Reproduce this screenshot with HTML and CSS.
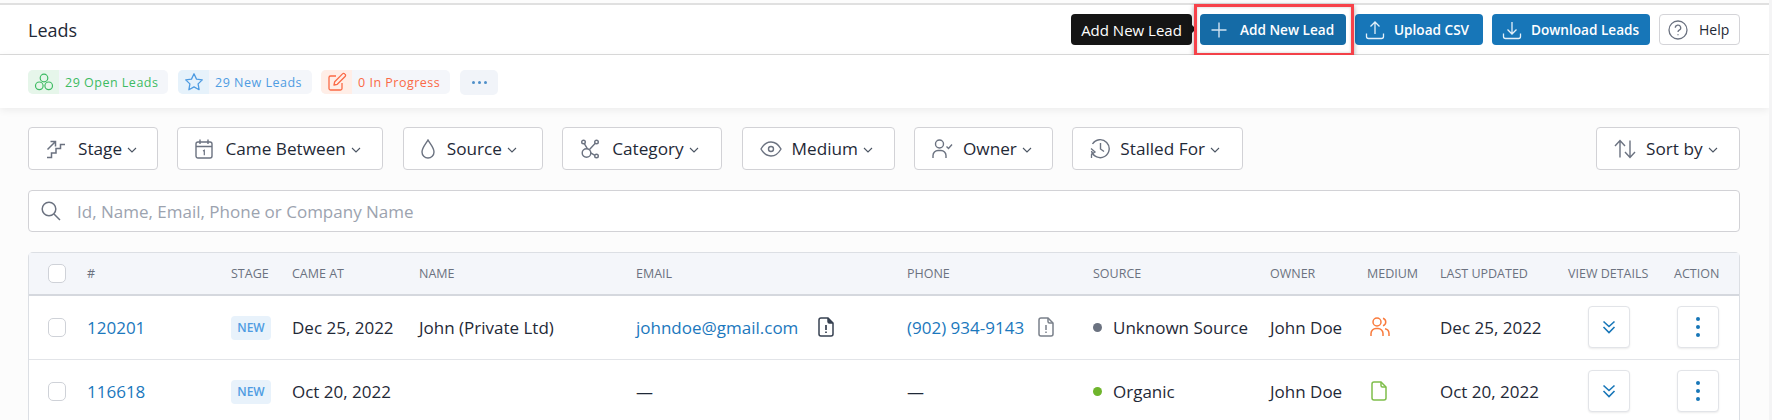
FILE: index.html
```html
<!DOCTYPE html>
<html lang="en">
<head>
    <meta charset="UTF-8">
    <meta name="viewport" content="width=device-width, initial-scale=1.0">
    <title>Leads</title>
    <link rel="stylesheet" href="styles.css">
</head>
<body>
<div class="page">
    <header class="topbar">
        <h1>Leads</h1>
        <div class="actions">
            <div class="add-wrap">
                <div class="tooltip">Add New Lead<span class="tooltip-ghost"><svg width="24" height="24" viewBox="0 0 24 24" fill="none" stroke="#2a2d30" stroke-width="1.5"><path d="M3 12l9-8 9 8v8H3z"/></svg></span></div>
                <button class="btn btn-primary btn-hover btn-add">
                    <svg width="18" height="18" viewBox="0 0 18 18" fill="none" stroke="#cfe3f2" stroke-width="1.4"><path d="M9 1.500v15M1.500 9h15"/></svg>
                    <span>Add New Lead</span>
                </button>
                <div class="red-box"></div>
            </div>
            <button class="btn btn-primary btn-upload">
                <svg width="20" height="20" viewBox="0 0 20 20" fill="none" stroke="#e4f0f9" stroke-width="1.3"><path d="M10 14V2M5.500 6.500L10 2l4.500 4.500M1.500 13.500v3a2 2 0 0 0 2 2h13a2 2 0 0 0 2-2v-3"/></svg>
                <span>Upload CSV</span>
            </button>
            <button class="btn btn-primary btn-download">
                <svg width="20" height="20" viewBox="0 0 20 20" fill="none" stroke="#e4f0f9" stroke-width="1.3"><path d="M10 2v12M5.500 9.500L10 14l4.500-4.500M1.500 13.500v3a2 2 0 0 0 2 2h13a2 2 0 0 0 2-2v-3"/></svg>
                <span>Download Leads</span>
            </button>
            <button class="btn btn-help">
                <svg width="20" height="20" viewBox="0 0 20 20" fill="none" stroke="#6b7280" stroke-width="1.3"><circle cx="10" cy="10" r="9"/><path d="M7.300 7.800a2.700 2.700 0 1 1 3.900 2.400c-.8.400-1.200 1-1.200 1.900"/><path d="M10 14.200v1.100"/></svg>
                <span>Help</span>
            </button>
        </div>
    </header>

    <div class="stats">
        <div class="chip chip-green">
            <span class="chip-icon"><svg width="20" height="20" viewBox="0 0 20 20" fill="none" stroke="currentColor" stroke-width="1.2"><circle cx="10" cy="6" r="3.800"/><circle cx="5.300" cy="13.800" r="3.800"/><circle cx="14.700" cy="13.800" r="3.800"/></svg></span>
            <span class="chip-text">29 Open Leads</span>
        </div>
        <div class="chip chip-blue">
            <span class="chip-icon"><svg width="20" height="20" viewBox="0 0 20 20" fill="none" stroke="currentColor" stroke-width="1.3" stroke-linejoin="round"><path d="M10 1.800l2.500 5.300 5.800.8-4.200 4 1 5.800-5.100-2.800-5.100 2.800 1-5.800-4.200-4 5.800-.8z"/></svg></span>
            <span class="chip-text">29 New Leads</span>
        </div>
        <div class="chip chip-orange">
            <span class="chip-icon"><svg width="20" height="20" viewBox="0 0 20 20" fill="none" stroke="currentColor" stroke-width="1.3" stroke-linejoin="round"><path d="M9 4H3.500A1.500 1.500 0 0 0 2 5.500v11A1.500 1.500 0 0 0 3.500 18h10a1.500 1.500 0 0 0 1.500-1.500V11"/><path d="M7 13l.7-3.300 7.800-7.800a1.500 1.500 0 0 1 2.200 0l.4.400a1.500 1.500 0 0 1 0 2.200l-7.800 7.800z"/></svg></span>
            <span class="chip-text">0 In Progress</span>
        </div>
        <button class="chip-more"><i></i><i></i><i></i></button>
    </div>

    <main class="content">
        <div class="filters">
            <button class="filter f-stage">
                <svg width="20" height="20" viewBox="0 0 20 20" fill="none" stroke="#6b7280" stroke-width="1.500"><path d="M1 18.500h4.500v-4.500h4.500v-4.500h4.500V5.500H19"/><path d="M1.500 10.500L9 3M4.500 2.500H9.500V7.500"/></svg>
                <span class="filter-label">Stage</span>
                <svg class="chev" width="10" height="6" viewBox="0 0 10 6" fill="none" stroke="#4b5563" stroke-width="1.100"><path d="M1 1l4 4 4-4"/></svg>
            </button>
            <button class="filter f-came">
                <svg width="18" height="20" viewBox="0 0 18 20" fill="none" stroke="#6b7280" stroke-width="1.400"><rect x="1" y="3" width="16" height="16" rx="2"/><path d="M1 7.500h16M5 .5v4.500M13 .5v4.500"/><path d="M8 12l1.300-.8v5" stroke-width="1.200"/></svg>
                <span class="filter-label">Came Between</span>
                <svg class="chev" width="10" height="6" viewBox="0 0 10 6" fill="none" stroke="#4b5563" stroke-width="1.100"><path d="M1 1l4 4 4-4"/></svg>
            </button>
            <button class="filter f-source">
                <svg width="14" height="20" viewBox="0 0 14 20" fill="none" stroke="#6b7280" stroke-width="1.400"><path d="M7 1c1.800 3.500 6 7.500 6 12a6 6 0 0 1-12 0C1 8.500 5.200 4.500 7 1z"/></svg>
                <span class="filter-label">Source</span>
                <svg class="chev" width="10" height="6" viewBox="0 0 10 6" fill="none" stroke="#4b5563" stroke-width="1.100"><path d="M1 1l4 4 4-4"/></svg>
            </button>
            <button class="filter f-category">
                <svg width="20" height="20" viewBox="0 0 20 20" fill="none" stroke="#6b7280" stroke-width="1.400"><circle cx="3.500" cy="3" r="1.800"/><circle cx="16.500" cy="3" r="1.800"/><circle cx="16.500" cy="17" r="1.800"/><circle cx="6.500" cy="14" r="4.300"/><path d="M4.300 4.600l3.200 5.200M15.300 4.300L9.500 10.500M10.700 13.800l4.200 2.500"/></svg>
                <span class="filter-label">Category</span>
                <svg class="chev" width="10" height="6" viewBox="0 0 10 6" fill="none" stroke="#4b5563" stroke-width="1.100"><path d="M1 1l4 4 4-4"/></svg>
            </button>
            <button class="filter filter-tight f-medium">
                <svg width="22" height="16" viewBox="0 0 22 16" fill="none" stroke="#6b7280" stroke-width="1.400"><path d="M1 8c2.500-4.500 6-7 10-7s7.500 2.500 10 7c-2.500 4.500-6 7-10 7S3.500 12.500 1 8z"/><circle cx="11" cy="8" r="2.500"/></svg>
                <span class="filter-label">Medium</span>
                <svg class="chev" width="10" height="6" viewBox="0 0 10 6" fill="none" stroke="#4b5563" stroke-width="1.100"><path d="M1 1l4 4 4-4"/></svg>
            </button>
            <button class="filter filter-tight f-owner">
                <svg width="21" height="20" viewBox="0 0 21 20" fill="none" stroke="#6b7280" stroke-width="1.400"><circle cx="7.500" cy="5" r="4"/><path d="M1 19v-2.500a5 5 0 0 1 5-5h3a5 5 0 0 1 5 5V19"/><path d="M14.500 7.500l2 2 3.500-4"/></svg>
                <span class="filter-label">Owner</span>
                <svg class="chev" width="10" height="6" viewBox="0 0 10 6" fill="none" stroke="#4b5563" stroke-width="1.100"><path d="M1 1l4 4 4-4"/></svg>
            </button>
            <button class="filter filter-tight f-stalled">
                <svg width="20" height="21" viewBox="0 0 20 21" fill="none" stroke="#6b7280" stroke-width="1.400"><path d="M2.500 6A9 9 0 1 1 1.500 13"/><path d="M10.500 5v6l3.500 2.500"/><path d="M1 10.500l4 3.500-3.500 2.500v3.500M1.500 15.500l4-1.500" stroke-width="1.300"/></svg>
                <span class="filter-label">Stalled For</span>
                <svg class="chev" width="10" height="6" viewBox="0 0 10 6" fill="none" stroke="#4b5563" stroke-width="1.100"><path d="M1 1l4 4 4-4"/></svg>
            </button>
            <button class="filter filter-tight filter-sort">
                <svg width="22" height="20" viewBox="0 0 22 20" fill="none" stroke="#6b7280" stroke-width="1.400"><path d="M6 18.500V2M1 7l5-5.500L11 7M16 1.500V18M11 13l5 5.500 5-5.500"/></svg>
                <span class="filter-label">Sort by</span>
                <svg class="chev" width="10" height="6" viewBox="0 0 10 6" fill="none" stroke="#4b5563" stroke-width="1.100"><path d="M1 1l4 4 4-4"/></svg>
            </button>
        </div>

        <div class="search">
            <svg width="20" height="20" viewBox="0 0 20 20" fill="none" stroke="#6b7280" stroke-width="1.500"><circle cx="8" cy="8" r="6.800"/><path d="M13 13l6 6"/></svg>
            <input type="text" placeholder="Id, Name, Email, Phone or Company Name">
        </div>

        <div class="table-wrap">
            <table class="leads">
                <colgroup>
                    <col class="c-check"><col class="c-id"><col class="c-stage"><col class="c-came"><col class="c-name"><col class="c-email"><col class="c-phone"><col class="c-source"><col class="c-owner"><col class="c-medium"><col class="c-updated"><col class="c-view"><col class="c-action">
                </colgroup>
                <thead>
                    <tr>
                        <th><span class="check"></span></th>
                        <th>#</th>
                        <th>Stage</th>
                        <th>Came At</th>
                        <th>Name</th>
                        <th>Email</th>
                        <th>Phone</th>
                        <th>Source</th>
                        <th>Owner</th>
                        <th>Medium</th>
                        <th>Last Updated</th>
                        <th>View Details</th>
                        <th>Action</th>
                    </tr>
                </thead>
                <tbody>
                    <tr>
                        <td><span class="check"></span></td>
                        <td><a class="link">120201</a></td>
                        <td><span class="badge">NEW</span></td>
                        <td>Dec 25, 2022</td>
                        <td>John (Private Ltd)</td>
                        <td><span class="with-icon with-icon-email"><a class="link">johndoe@gmail.com</a>
                            <svg width="16" height="20" viewBox="0 0 16 20" fill="none" stroke="#374151" stroke-width="1.500"><path d="M10 1H3a2 2 0 0 0-2 2v14a2 2 0 0 0 2 2h10a2 2 0 0 0 2-2V6z"/><path d="M10 1v3.500a1.500 1.500 0 0 0 1.500 1.500H15" fill="#374151"/><path d="M8 8v5M8 14.500v1.500" stroke-width="1.700"/></svg></span></td>
                        <td><span class="with-icon with-icon-phone"><a class="link">(902) 934-9143</a>
                            <svg width="16" height="20" viewBox="0 0 16 20" fill="none" stroke="#7a808a" stroke-width="1.500"><path d="M10 1H3a2 2 0 0 0-2 2v14a2 2 0 0 0 2 2h10a2 2 0 0 0 2-2V6z"/><path d="M10 1v3.500a1.500 1.500 0 0 0 1.500 1.500H15"/><path d="M8 8v5M8 14.500v1.500" stroke-width="1.500"/></svg></span></td>
                        <td><span class="source"><i class="dot dot-gray"></i>Unknown Source</span></td>
                        <td>John Doe</td>
                        <td><svg class="medium-icon" width="20" height="20" viewBox="0 0 20 20" fill="none" stroke="#f97b3d" stroke-width="1.500"><circle cx="7" cy="5" r="4"/><path d="M1 19v-2.500a5 5 0 0 1 5-5h2a5 5 0 0 1 5 5V19"/><path d="M13 1.200a4 4 0 0 1 0 7.600M15 11.700a5 5 0 0 1 4 4.800V19"/></svg></td>
                        <td>Dec 25, 2022</td>
                        <td><button class="row-btn row-btn-view"><svg width="14" height="14" viewBox="0 0 14 14" fill="none" stroke="#1776b8" stroke-width="1.600"><path d="M1.500 1.500L7 6.500l5.500-5M1.500 7L7 12.500 12.500 7"/></svg></button></td>
                        <td><button class="row-btn row-btn-action"><i></i><i></i><i></i></button></td>
                    </tr>
                    <tr>
                        <td><span class="check"></span></td>
                        <td><a class="link">116618</a></td>
                        <td><span class="badge">NEW</span></td>
                        <td>Oct 20, 2022</td>
                        <td></td>
                        <td>—</td>
                        <td>—</td>
                        <td><span class="source"><i class="dot dot-green"></i>Organic</span></td>
                        <td>John Doe</td>
                        <td><svg class="medium-icon medium-doc" width="16" height="20" viewBox="0 0 16 20" fill="none" stroke="#7fbe4b" stroke-width="1.500"><path d="M10 1H3a2 2 0 0 0-2 2v14a2 2 0 0 0 2 2h10a2 2 0 0 0 2-2V6z"/><path d="M10 1v3.500a1.500 1.500 0 0 0 1.500 1.500H15"/></svg></td>
                        <td>Oct 20, 2022</td>
                        <td><button class="row-btn row-btn-view"><svg width="14" height="14" viewBox="0 0 14 14" fill="none" stroke="#1776b8" stroke-width="1.600"><path d="M1.500 1.500L7 6.500l5.500-5M1.500 7L7 12.500 12.500 7"/></svg></button></td>
                        <td><button class="row-btn row-btn-action"><i></i><i></i><i></i></button></td>
                    </tr>
                </tbody>
            </table>
        </div>
    </main>
</div>
</body>
</html>
```

FILE: styles.css
```css
* {
    box-sizing: border-box;
}
html, body {
    height: 100%;
}
body {
    margin: 0;
    overflow: hidden;
    background-color: #f4f4f5;
    font-family: 'Open Sans', 'Noto Sans', sans-serif;
    color: #1f2937;
}
button {
    font-family: inherit;
    cursor: pointer;
}
.page {
    width: 1769px;
    height: 420px;
    padding-top: 3px;
    overflow: hidden;
    background-color: #fcfcfc;
}
.topbar {
    display: flex;
    justify-content: space-between;
    align-items: center;
    height: 52px;
    padding: 8px 29px 8px 28px;
    background-color: #fff;
    border-top: 2px solid #e0e0e0;
    border-bottom: 1px solid #dcdcdc;
}
h1 {
    margin: 0;
    font-size: 18px;
    font-weight: 500;
    color: #1f2937;
}
.actions {
    display: flex;
    align-items: center;
    gap: 9px;
}
.add-wrap {
    position: relative;
}
.btn {
    display: flex;
    align-items: center;
    height: 31px;
    border: none;
    border-radius: 4px;
    font-size: 13.600px;
    font-weight: 600;
}
.btn-primary {
    gap: 9px;
    padding: 0 0 0 10px;
    background-color: #1776b8;
    color: #fff;
}
.btn-hover {
    background-color: #156ba6;
}
.btn-add {
    width: 146px;
    gap: 12px;
}
.btn-upload {
    width: 128px;
}
.btn-download {
    width: 158px;
}
.btn-help {
    gap: 11px;
    width: 81px;
    padding: 0 8px;
    background-color: #fff;
    border: 1px solid #d4d4d8;
    color: #1f2937;
    font-size: 14px;
    font-weight: 500;
}
.tooltip {
    position: absolute;
    top: 0;
    right: 154px;
    display: flex;
    align-items: center;
    justify-content: center;
    width: 121px;
    height: 31px;
    border-radius: 4px;
    background-color: #151515;
    color: #fff;
    font-size: 15px;
    white-space: nowrap;
}
.tooltip::after {
    content: "";
    position: absolute;
    top: 11px;
    right: -4px;
    border-top: 4px solid transparent;
    border-bottom: 4px solid transparent;
    border-left: 4px solid #151515;
}
.tooltip-ghost {
    position: absolute;
    top: 0;
    right: 0;
    display: flex;
    align-items: center;
    justify-content: center;
    width: 46px;
    height: 31px;
    border-radius: 0 4px 4px 0;
    background-color: rgba(0, 10, 20, 0.6);
    z-index: -1;
}
.red-box {
    position: absolute;
    top: -10px;
    left: -6px;
    width: 160px;
    height: 52px;
    border: 3px solid #f7424a;
    box-shadow: 0 2px 5px rgba(0, 0, 0, 0.35), inset 0 0 3px rgba(0, 0, 0, 0.2);
    pointer-events: none;
}
.stats {
    display: flex;
    align-items: flex-start;
    height: 53px;
    padding: 15px 28px 0;
    background-color: #fff;
    box-shadow: 0 2px 8px rgba(0, 0, 0, 0.07);
    position: relative;
}
.chip {
    display: flex;
    align-items: center;
    height: 24px;
    border-radius: 5px;
    background-color: #f4f6fa;
    overflow: hidden;
    font-size: 12.500px;
    font-weight: 500;
    letter-spacing: 0.500px;
}
.chip-icon {
    display: flex;
    align-items: center;
    justify-content: center;
    width: 31px;
    height: 24px;
    margin-right: 6px;
}
.chip-green {
    width: 140px;
    margin-right: 10px;
    color: #3dbb62;
}
.chip-green .chip-icon {
    background-color: #e6f6ea;
}
.chip-blue {
    width: 134px;
    margin-right: 9px;
    color: #4f9ce2;
}
.chip-blue .chip-icon {
    background-color: #e6f2fb;
}
.chip-orange {
    width: 129px;
    margin-right: 10px;
    color: #fb6a46;
}
.chip-orange .chip-icon {
    background-color: #ffeee7;
}
.chip-more {
    display: flex;
    align-items: center;
    justify-content: center;
    gap: 3px;
    width: 38px;
    height: 25px;
    border: none;
    border-radius: 5px;
    background-color: #f1f4f9;
}
.chip-more i {
    width: 3px;
    height: 3px;
    border-radius: 50%;
    background-color: #4f8fc9;
}
.content {
    padding: 19px 29px 0 28px;
}
.filters {
    display: flex;
    align-items: center;
    gap: 19.400px;
}
.filter {
    display: flex;
    align-items: center;
    height: 43px;
    padding: 0 0 0 17px;
    background-color: #fff;
    border: 1px solid #d2d2d6;
    border-radius: 4px;
    color: #1f2937;
    font-size: 17.200px;
    font-weight: 500;
    white-space: nowrap;
}
.filter-label {
    margin: 0 5px 0 12px;
}
.filter-tight .filter-label {
    margin-left: 10px;
}
.f-stage { width: 130px; }
.f-came { width: 206px; }
.f-source { width: 140px; }
.f-category { width: 160px; }
.f-medium { width: 153px; }
.f-owner { width: 139px; }
.f-stalled { width: 171px; }
.filter-sort {
    width: 144px;
    margin-left: auto;
}
.chev {
    margin-top: 2px;
}
.search {
    display: flex;
    align-items: center;
    gap: 14px;
    height: 42px;
    margin-top: 20px;
    padding: 0 12px;
    background-color: #fff;
    border: 1px solid #d2d2d6;
    border-radius: 4px;
}
.search input {
    flex: 1;
    border: none;
    outline: none;
    font-family: inherit;
    font-size: 17px;
}
.search input::placeholder {
    color: #9ca3af;
}
.table-wrap {
    margin-top: 20px;
    background-color: #fff;
    border: 1px solid #dcdfe4;
    border-bottom: none;
    border-radius: 5px 5px 0 0;
}
.leads {
    width: 100%;
    table-layout: fixed;
    border-collapse: collapse;
    font-size: 17px;
}
.c-check { width: 58px; }
.c-id { width: 144px; }
.c-stage { width: 61px; }
.c-came { width: 127px; }
.c-name { width: 217px; }
.c-email { width: 271px; }
.c-phone { width: 186px; }
.c-source { width: 177px; }
.c-owner { width: 97px; }
.c-medium { width: 73px; }
.c-updated { width: 128px; }
.c-view { width: 106px; }
.c-action { width: 65px; }
.leads th {
    height: 42px;
    padding: 0;
    background-color: #f4f6fa;
    border-bottom: 2px solid #d5d8de;
    color: #6b7280;
    font-size: 12.500px;
    font-weight: 500;
    text-align: left;
    text-transform: uppercase;
    white-space: nowrap;
}
.leads td {
    height: 64px;
    padding: 0;
    border-bottom: 1px solid #e2e4e8;
    white-space: nowrap;
}
.check {
    display: block;
    width: 18px;
    height: 19px;
    margin-left: 19px;
    background-color: #fff;
    border: 1px solid #cfd2d8;
    border-radius: 5px;
}
.link {
    color: #1b78bd;
}
.badge {
    display: inline-block;
    width: 40px;
    height: 24px;
    border-radius: 4px;
    background-color: #e8f2fb;
    color: #4f9ce2;
    font-size: 12px;
    font-weight: 600;
    line-height: 24px;
    text-align: center;
    vertical-align: middle;
}
.with-icon {
    display: flex;
    align-items: center;
}
.with-icon-email svg {
    margin-left: 20px;
}
.with-icon-phone svg {
    margin-left: 14px;
}
.source {
    display: flex;
    align-items: center;
    gap: 11px;
}
.dot {
    width: 9px;
    height: 9px;
    border-radius: 50%;
}
.dot-gray {
    background-color: #6b7280;
}
.dot-green {
    background-color: #6fb52c;
}
.medium-icon {
    display: block;
    margin-left: 3px;
}
.medium-doc {
    margin-left: 4px;
}
.row-btn {
    display: flex;
    align-items: center;
    justify-content: center;
    width: 42px;
    height: 42px;
    background-color: #fff;
    border: 1px solid #e2e4e8;
    border-radius: 4px;
    box-shadow: 0 1px 2px rgba(0, 0, 0, 0.08);
}
.row-btn-view {
    margin-left: 20px;
}
.row-btn-action {
    flex-direction: column;
    gap: 4px;
    margin-left: 3px;
}
.row-btn-action i {
    width: 4px;
    height: 4px;
    border-radius: 50%;
    background-color: #1776b8;
}
```
